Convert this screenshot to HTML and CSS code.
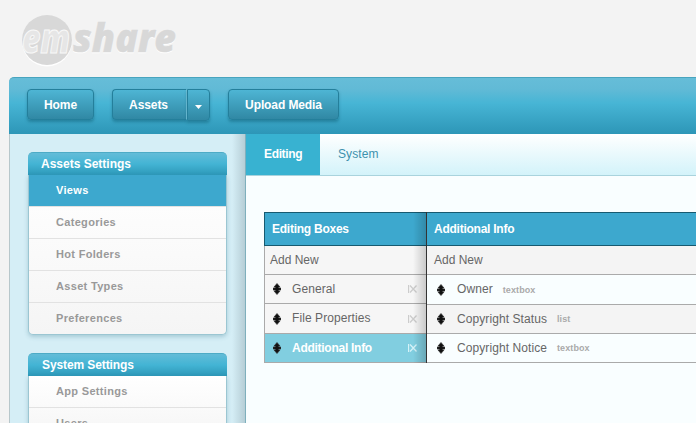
FILE: index.html
```html
<!DOCTYPE html>
<html lang="en">
<head>
<meta charset="utf-8">
<title>emshare</title>
<link rel="stylesheet" href="styles.css">
</head>
<body>
<svg class="defs" width="0" height="0" aria-hidden="true">
  <symbol id="move" viewBox="0 0 8 12"><path d="M4 .5L7 4H5.6V5H8V7H5.6V8H7L4 11.5L1 8H2.4V7H0V5H2.4V4H1Z" fill="#111" stroke="#333" stroke-width=".7"/></symbol>
  <symbol id="remove" viewBox="0 0 9 8"><path d="M.5 0V8M2 .5L8.5 7.5M8.5 .5L2 7.5" fill="none" stroke="currentColor" stroke-width="1.3"/></symbol>
</svg>
<header class="brand">
  <svg class="logo" width="160" height="56" viewBox="0 0 160 56">
    <circle cx="27" cy="28.5" r="25" fill="#fff"/>
    <circle cx="27" cy="27" r="25" fill="#d8d8d8"/>
    <text class="em" x="2" y="39.5" textLength="48" lengthAdjust="spacingAndGlyphs">em</text>
    <text class="share light" x="53" y="40" textLength="103" lengthAdjust="spacingAndGlyphs">share</text>
    <text class="share" x="53" y="38.5" textLength="103" lengthAdjust="spacingAndGlyphs">share</text>
  </svg>
</header>
<div class="app">
  <nav class="toolbar">
    <a class="btn home">Home</a>
    <div class="split"><a class="btn assets">Assets</a><a class="btn drop"><svg width="7" height="4"><path d="M0 0H7L3.5 4Z" fill="#fff"/></svg></a></div>
    <a class="btn upload">Upload Media</a>
  </nav>
  <div class="columns">
    <aside class="sidebar">
      <section class="module">
        <h2>Assets Settings</h2>
        <ul><li class="active">Views</li><li>Categories</li><li>Hot Folders</li><li>Asset Types</li><li>Preferences</li></ul>
      </section>
      <section class="module">
        <h2 class="second">System Settings</h2>
        <ul><li>App Settings</li><li>Users</li></ul>
      </section>
    </aside>
    <main class="main">
      <div class="tabs"><a class="tab active">Editing</a><a class="tab">System</a></div>
      <div class="table">
        <div class="boxes">
          <h3>Editing Boxes</h3>
          <div class="row add">Add New</div>
          <div class="row"><svg class="move"><use href="#move"/></svg><span>General</span><svg class="remove"><use href="#remove"/></svg></div>
          <div class="row tall"><svg class="move"><use href="#move"/></svg><span>File Properties</span><svg class="remove"><use href="#remove"/></svg></div>
          <div class="row selected"><svg class="move"><use href="#move"/></svg><span>Additional Info</span><svg class="remove"><use href="#remove"/></svg></div>
        </div>
        <div class="fields">
          <h3>Additional Info</h3>
          <div class="row add">Add New</div>
          <div class="row tall pale"><svg class="move"><use href="#move"/></svg><span>Owner</span><small>textbox</small></div>
          <div class="row"><svg class="move"><use href="#move"/></svg><span>Copyright Status</span><small>list</small></div>
          <div class="row pale"><svg class="move"><use href="#move"/></svg><span>Copyright Notice</span><small>textbox</small></div>
        </div>
      </div>
    </main>
  </div>
</div>
</body>
</html>
```
FILE: styles.css
```css
* { box-sizing: border-box; }
body { margin: 0; height: 423px; overflow: hidden; background: #f3f3f3; font: 12px "Liberation Sans", Arial, sans-serif; color: #666; }
.defs { position: absolute; }
.brand { height: 77px; padding: 13px 0 0 20px; }
.logo { display: block; overflow: visible; }
.logo text { font-family: "Open Sans", sans-serif; font-weight: 800; font-style: italic; }
.em { font-size: 40px; fill: #e6e6e6; stroke: #f8f8f8; stroke-width: 1.1; }
.share { font-size: 38px; fill: #d8d8d8; stroke: #d8d8d8; stroke-width: .5; }
.share.light { fill: #fff; stroke: #fff; }
.app { margin-left: 9px; }
.toolbar { display: flex; height: 57px; padding: 11px 18px; border-top: 1px solid #48a4be; border-radius: 5px 0 0 0; background: linear-gradient(#66bdd8, #61bad6 20%, #47b5d5 45%, #2d96b7); }
.btn { display: flex; align-items: center; justify-content: center; height: 31px; border: 1px solid #247f9b; border-radius: 4px; background: linear-gradient(#4eb5d4, #3088a4); color: #fff; font-weight: bold; letter-spacing: -.1px; box-shadow: 0 2px 3px rgba(0,70,90,.35); }
.home { width: 67px; }
.split { display: flex; margin: 0 18px; }
.assets { width: 75px; padding-right: 2px; border-radius: 4px 0 0 4px; border-right-color: #72c4dc; }
.drop { width: 23px; height: 32px; border-radius: 0 4px 4px 0; padding-top: 3px; }
.upload { width: 111px; }
.columns { display: flex; height: 289px; overflow: hidden; }
.sidebar { width: 237px; padding: 18px 18px 0; border-left: 1px solid #b7c7cb; border-right: 1px solid #7fb0bd; background: linear-gradient(to right, #d5eef6 222px, #b6ced6 235px); }
.module { width: 199px; margin-bottom: 18px; }
.module h2 { height: 23px; margin: 0; padding-left: 13px; border-top: 1px solid #4dabc6; border-radius: 5px 5px 0 0; background: linear-gradient(#63bcd8, #43b4d4 50%, #2d98b8); color: #fff; font-size: 12px; line-height: 22px; }
.module h2.second { padding-left: 14px; letter-spacing: -.1px; }
.module ul { margin: 0; padding: 0; list-style: none; border: 1px solid #9bc6d2; border-top: 0; border-radius: 0 0 5px 5px; background: linear-gradient(#fff, #f5f5f5); box-shadow: 0 2px 4px rgba(60,120,140,.3); }
.module li { height: 32px; padding-left: 27px; border-bottom: 1px solid #e2e2e2; color: #999; font-size: 11px; font-weight: bold; line-height: 30px; letter-spacing: .32px; }
.module li:last-child { height: 31px; border: 0; }
.module li.active { background: #3da8ce; color: #fff; }
.main { flex: 1; min-width: 0; overflow: hidden; background: #f9feff; }
.tabs { display: flex; height: 42px; border-bottom: 1px solid #a9d3dd; background: linear-gradient(#fff, #d3f3fa); }
.tab { padding: 0 18px; font-size: 12px; line-height: 40px; color: #3d91ae; letter-spacing: .1px; }
.tab.active { width: 74px; background: #38b2d1; color: #fff; font-weight: bold; letter-spacing: -.35px; }
.table { display: flex; margin: 36px 0 0 18px; }
.boxes { position: relative; width: 162px; }
.boxes::after { content: ""; position: absolute; top: 0; right: 0; bottom: 0; width: 13px; background: linear-gradient(to right, transparent, rgba(0,0,0,.18)); }
.fields { flex: 1; border-left: 1px solid #333; }
.table h3 { height: 34px; margin: 0; padding-left: 7px; border: 1px solid #175a70; border-right: 0; background: #3da8ce; color: #fff; font-size: 12px; line-height: 32px; letter-spacing: -.25px; }
.fields h3 { border-left: 0; }
.row { display: flex; align-items: center; height: 29px; padding-left: 7px; border-bottom: 1px solid #aaa; background: #f6f6f6; }
.row span { letter-spacing: .08px; }
.boxes .row { border-left: 1px solid #aaa; padding-left: 8px; }
.boxes .add { padding-left: 5px; }
.row.tall { height: 30px; }
.boxes .tall span { margin-top: -2px; }
.fields .tall span { margin-top: -1px; }
.fields .row { padding-left: 10px; background: #f4f4f4; }
.fields .add { padding-left: 7px; }
.fields .row.pale { background: #f9feff; }
.move { width: 8px; height: 12px; margin-right: 11px; flex: none; }
.fields .move { margin-right: 12px; }
.remove { width: 9px; height: 8px; margin: 0 9px 0 auto; color: #ccc; }
.row small { margin: 0 0 0 10px; font-size: 9px; font-weight: bold; color: #aaa; letter-spacing: .1px; }
.boxes .selected { background: #81cee0; color: #fff; font-weight: bold; }
.selected span { letter-spacing: -.27px; }
.selected .remove { color: #d5f2f8; }
```
